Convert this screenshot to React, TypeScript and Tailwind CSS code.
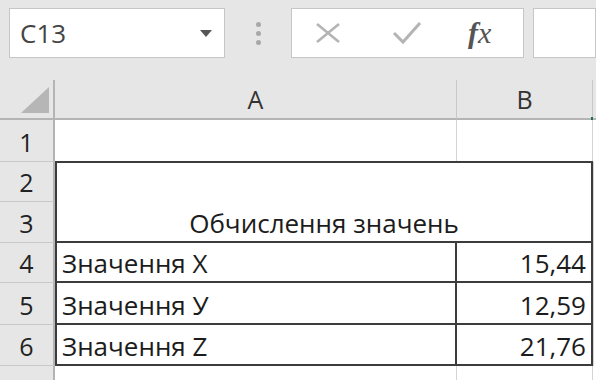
import React from "react";

const font = { fontFamily: '"Open Sans", "Liberation Sans", Arial, sans-serif' };

function RowHead({ n, h }: { n: string; h: string }) {
  return (
    <div
      className={`flex items-end justify-center pb-[6px] leading-none bg-[#e6e6e6] border-b border-[#c8c8c8] border-r-2 border-r-[#b4b4b4] text-[25px] text-[#222] ${h}`}
    >
      {n}
    </div>
  );
}

export default function App() {
  return (
    <div className="w-[596px] h-[380px] overflow-hidden bg-[#e6e6e6] text-[#1c1c1c]" style={font}>
      {/* toolbar */}
      <div className="flex items-start h-[80px] pt-[8px]">
        <div className="ml-[9px] w-[216px] h-[50px] bg-white border border-[#c6c6c6] flex items-center justify-between pl-[10px] pr-[12px]">
          <span className="text-[26px] leading-none text-[#444]">C13</span>
          <svg width="12" height="7" viewBox="0 0 12 7">
            <path d="M0 0 L12 0 L6 7 Z" fill="#555" />
          </svg>
        </div>
        <div className="w-[66px] h-[50px] flex flex-col items-center justify-center gap-[4px]">
          <div className="w-[5px] h-[5px] rounded-full bg-[#a8a8a8]" />
          <div className="w-[5px] h-[5px] rounded-full bg-[#a8a8a8]" />
          <div className="w-[5px] h-[5px] rounded-full bg-[#a8a8a8]" />
        </div>
        <div className="w-[233px] h-[50px] bg-white border border-[#c6c6c6] flex items-center">
          <svg className="ml-[22px]" width="28" height="22" viewBox="0 0 28 22">
            <path d="M3 2 L25 20 M25 2 L3 20" stroke="#b4b4b4" strokeWidth="2.6" />
          </svg>
          <svg className="ml-[50px]" width="30" height="26" viewBox="0 0 30 26">
            <path d="M2 13 L11 22 L28 3" stroke="#b4b4b4" strokeWidth="3" fill="none" />
          </svg>
          <span
            className="ml-[46px] text-[30px] leading-none italic text-[#555]"
            style={{ fontFamily: '"Liberation Serif", "Times New Roman", serif' }}
          >
            <span className="font-bold">f</span>x
          </span>
        </div>
        <div className="ml-[9px] flex-1 h-[50px] bg-white border border-[#c6c6c6]" />
      </div>

      {/* grid */}
      <div className="grid grid-cols-[55px_402px_136px_1fr]">
        {/* header row */}
        <div className="h-[40px] bg-[#e6e6e6] border-b-2 border-[#b4b4b4] border-r-2 border-r-[#b4b4b4] flex items-end justify-end pr-[4px] pb-[5px]">
          <svg width="28" height="26" viewBox="0 0 28 26">
            <path d="M28 0 L28 26 L0 26 Z" fill="#b6b6b6" />
          </svg>
        </div>
        <div className="h-[40px] bg-[#e6e6e6] border-b-2 border-[#b4b4b4] border-r border-r-[#c8c8c8] flex items-center justify-center text-[25px] leading-none text-[#333]">
          A
        </div>
        <div className="h-[40px] bg-[#e6e6e6] border-b-2 border-[#b4b4b4] border-r border-r-[#c8c8c8] flex items-center justify-center text-[25px] leading-none text-[#333] relative">
          B
          <div className="absolute right-[-1px] bottom-[-2px] w-[2px] h-[3px] bg-[#217346]" />
        </div>
        <div className="h-[40px] bg-[#e6e6e6] border-b-2 border-[#b4b4b4]" />

        {/* row 1 */}
        <RowHead n="1" h="h-[42px]" />
        <div className="h-[42px] bg-white border-r border-b border-[#d4d4d4]" />
        <div className="h-[42px] bg-white border-r border-b border-[#d4d4d4]" />
        <div className="h-[42px] bg-white" />

        {/* rows 2-6 heads */}
        <div className="flex flex-col">
          <RowHead n="2" h="h-[40px]" />
          <RowHead n="3" h="h-[41px]" />
          <RowHead n="4" h="h-[40px]" />
          <RowHead n="5" h="h-[42px]" />
          <RowHead n="6" h="h-[41px]" />
        </div>
        <div className="col-span-2 bg-white border-2 border-[#3c3c3c] flex flex-col -mt-[1px] text-[26px] leading-none">
          <div className="h-[80px] flex items-end justify-center pb-[5px] border-b-2 border-[#3c3c3c]">
            Обчислення значень
          </div>
          {[
            ["Значення X", "15,44", "h-[40px]"],
            ["Значення У", "12,59", "h-[42px]"],
            ["Значення Z", "21,76", "h-[39px]"],
          ].map(([a, b, h], i) => (
            <div
              key={a}
              className={`flex ${h} ${i < 2 ? "border-b-2 border-[#3c3c3c]" : ""}`}
            >
              <div className="w-[400px] border-r-2 border-[#3c3c3c] flex items-end pl-[5px] pb-[5px]">
                {a}
              </div>
              <div className="flex-1 flex items-end justify-end pr-[5px] pb-[5px]">{b}</div>
            </div>
          ))}
        </div>
        <div className="bg-white border-l border-[#d4d4d4]" />

        {/* row 7 */}
        <div className="h-[42px] flex justify-center pt-[10px] leading-none bg-[#e6e6e6] border-r-2 border-r-[#b4b4b4] text-[25px] text-[#222]">
          7
        </div>
        <div className="h-[42px] bg-white border-r border-[#d4d4d4]" />
        <div className="h-[42px] bg-white border-r border-[#d4d4d4]" />
        <div className="h-[42px] bg-white" />
      </div>
    </div>
  );
}
